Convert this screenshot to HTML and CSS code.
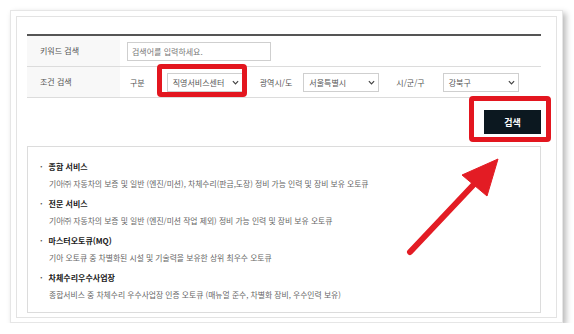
FILE: index.html
```html
<!DOCTYPE html>
<html lang="ko">

<head>
  <meta charset="UTF-8" />
  <meta name="viewport" content="width=device-width, initial-scale=1.0" />
  <title>오토큐 검색</title>
  <link rel="stylesheet" href="styles.css">
</head>

<body>
  <div class="frame">
    <div class="inner">
      <div class="search-table">
        <div class="row">
          <div class="label">키워드 검색</div>
          <div class="cell">
            <div class="text-input">검색어를 입력하세요.</div>
          </div>
        </div>
        <div class="row">
          <div class="label">조건 검색</div>
          <div class="cell">
            <span class="field-name first">구분</span>
            <div class="select">직영서비스센터<svg viewBox="0 0 8 5"><path d="M1 1l3 3 3-3" /></svg></div>
            <span class="field-name">광역시/도</span>
            <div class="select">서울특별시<svg viewBox="0 0 8 5"><path d="M1 1l3 3 3-3" /></svg></div>
            <span class="field-name last">시/군/구</span>
            <div class="select">강북구<svg viewBox="0 0 8 5"><path d="M1 1l3 3 3-3" /></svg></div>
          </div>
        </div>
      </div>

      <div class="btn-area">
        <button class="search-btn">검색</button>
      </div>

      <div class="info">
        <div class="item">
          <p class="item-title">종합 서비스</p>
          <p class="item-desc">기아㈜ 자동차의 보증 및 일반 (엔진/미션), 차체수리(판금,도장) 정비 가능 인력 및 장비 보유 오토큐</p>
        </div>
        <div class="item">
          <p class="item-title">전문 서비스</p>
          <p class="item-desc">기아㈜ 자동차의 보증 및 일반 (엔진/미션 작업 제외) 정비 가능 인력 및 장비 보유 오토큐</p>
        </div>
        <div class="item">
          <p class="item-title">마스터오토큐(MQ)</p>
          <p class="item-desc">기아 오토큐 중 차별화된 시설 및 기술력을 보유한 상위 최우수 오토큐</p>
        </div>
        <div class="item">
          <p class="item-title">차체수리우수사업장</p>
          <p class="item-desc">종합서비스 중 차체수리 우수사업장 인증 오토큐 (매뉴얼 준수, 차별화 장비, 우수인력 보유)</p>
        </div>
      </div>
    </div>
  </div>

  <!-- annotations drawn over the capture -->
  <div class="mark mark-select"></div>
  <div class="mark mark-btn"></div>
  <svg class="arrow" viewBox="0 0 574 334">
    <line x1="410" y1="252" x2="478" y2="180" />
    <polygon points="498,159 462,175 487,196" />
  </svg>
</body>

</html>
```

FILE: styles.css
```css
body {
  margin: 0;
  background: #fff;
  font-family: "Noto Sans CJK KR", "Noto Sans", sans-serif;
  color: #555;
}

.frame {
  margin: 10px 0 0 10px;
  width: 541px;
  height: 301px;
  padding: 5px;
  border: 1px solid #e6e6e6;
  background: #fff;
  box-shadow: 3px 3px 6px rgba(0, 0, 0, 0.28);
}

.inner {
  height: 283px;
  border: 1px solid #e3e3e3;
  padding: 17px 15px 0 10px;
}

.search-table {
  border-top: 2px solid #555;
}

.row {
  display: flex;
  height: 30px;
  border-bottom: 1px solid #dcdcdc;
}

.label {
  width: 80px;
  padding-left: 13px;
  background: #f8f8f8;
  font-size: 8px;
  line-height: 30px;
  color: #555;
}

.cell {
  flex: 1;
  display: flex;
  align-items: center;
  padding-left: 7px;
  font-size: 8px;
}

.text-input {
  width: 138px;
  height: 17px;
  border: 1px solid #cfcfcf;
  padding-left: 4px;
  line-height: 17px;
  color: #777;
}

.field-name {
  margin: 0 11px 0 17px;
  color: #555;
}

.field-name.first {
  margin-left: 3px;
  margin-right: 22px;
}

.field-name.last {
  margin-right: 18px;
}

.select {
  width: 66px;
  height: 17px;
  border: 1px solid #cfcfcf;
  padding: 0 3px 0 5px;
  display: flex;
  align-items: center;
  justify-content: space-between;
  color: #555;
}

.select svg {
  width: 7px;
  height: 5px;
  fill: none;
  stroke: #444;
  stroke-width: 1.4;
}

.btn-area {
  display: flex;
  justify-content: flex-end;
  padding-top: 12px;
}

.search-btn {
  width: 57px;
  height: 24px;
  border: 0;
  background: #0c1820;
  color: #fff;
  font-family: "Noto Sans CJK KR", sans-serif;
  font-size: 9px;
  font-weight: 700;
}

.info {
  margin-top: 12px;
  height: 153px;
  border: 1px solid #dcdcdc;
  padding: 12px 0 0 12px;
}

.item {
  margin-bottom: 3px;
}

.item-title {
  margin: 0;
  font-size: 8px;
  font-weight: 700;
  line-height: 16px;
  color: #222;
}

.item-title::before {
  content: "·";
  margin-right: 6px;
  color: #555;
}

.item-desc {
  margin: 0 0 0 9px;
  font-size: 7.8px;
  line-height: 18px;
  color: #666;
}

.mark {
  position: absolute;
  border: 5px solid #e3161f;
  border-radius: 4px;
}

.mark-select {
  left: 157px;
  top: 64px;
  width: 80px;
  height: 23px;
}

.mark-btn {
  left: 469px;
  top: 96px;
  width: 72px;
  height: 36px;
}

.arrow {
  position: absolute;
  left: 0;
  top: 0;
  width: 574px;
  height: 334px;
}

.arrow line {
  stroke: #e31c24;
  stroke-width: 6;
  stroke-linecap: round;
}

.arrow polygon {
  fill: #e31c24;
  stroke: #e31c24;
  stroke-width: 1;
  stroke-linejoin: round;
}
```
